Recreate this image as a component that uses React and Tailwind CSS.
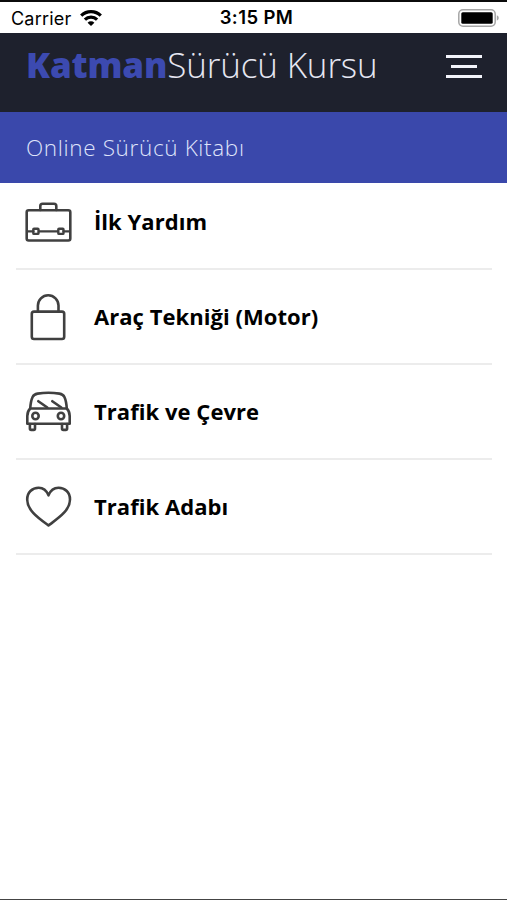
const chapters = [
  { title: "İlk Yardım", Icon: BriefcaseIcon },
  { title: "Araç Tekniği (Motor)", Icon: LockIcon },
  { title: "Trafik ve Çevre", Icon: CarIcon },
  { title: "Trafik Adabı", Icon: HeartIcon },
];

export default function App() {
  return (
    <div className="flex h-[900px] w-[507px] flex-col overflow-hidden border-t-2 border-b border-t-[#0b0b0b] border-b-[#444] bg-white font-['Open_Sans',sans-serif]">
      <StatusBar />
      <Header />
      <div className="flex h-[71px] shrink-0 items-center bg-[#3a48ab] px-[26px]">
        <h1 className="text-[22.5px] font-light tracking-[0.65px] text-[#dfe3fa]">Online Sürücü Kitabı</h1>
      </div>
      <ul className="-mt-2 pr-[15px] pl-4">
        {chapters.map((chapter) => (
          <ChapterRow key={chapter.title} {...chapter} />
        ))}
      </ul>
    </div>
  );
}

function StatusBar() {
  return (
    <div className="grid h-[31px] shrink-0 grid-cols-3 items-center bg-white pt-px pr-2 pl-[11px] font-['Inter','Liberation_Sans',sans-serif] text-black">
      <div className="flex items-center gap-[9px]">
        <span className="text-[18px] tracking-[0.2px]">Carrier</span>
        <WifiIcon />
      </div>
      <span className="pl-[3px] text-center text-[18.5px] font-semibold tracking-[0.4px] whitespace-nowrap">3:15 PM</span>
      <div className="flex justify-end">
        <BatteryIcon />
      </div>
    </div>
  );
}

function Header() {
  return (
    <header className="flex h-[79px] shrink-0 items-start justify-between bg-[#1e212d] pr-[25px] pl-[26px]">
      <div className="pt-[7px] text-[35px] leading-[50px] tracking-[-0.15px] whitespace-nowrap">
        <span className="font-extrabold text-[#3c4ab0]">Katman</span>
        <span className="font-light text-[#e6e7f2]">Sürücü Kursu</span>
      </div>
      <button className="mt-[22px] flex w-9 flex-col items-center gap-[7px]" aria-label="Menü">
        <span className="h-[3px] w-9 bg-[#f3f4fb]" />
        <span className="h-[3px] w-[26px] bg-[#f3f4fb]" />
        <span className="h-[3px] w-9 bg-[#f3f4fb]" />
      </button>
    </header>
  );
}

function ChapterRow({ title, Icon }) {
  return (
    <li className="flex h-[95px] items-center gap-[22px] border-b-2 border-[#ececec] pl-2">
      <Icon />
      <span className="text-[22px] font-bold tracking-[0.05px] text-black">{title}</span>
    </li>
  );
}

function LineIcon({ children }) {
  return (
    <svg
      className="size-12 shrink-0 text-[#404040]"
      viewBox="0 0 48 48"
      fill="none"
      stroke="currentColor"
      strokeWidth="2.6"
      strokeLinecap="round"
      strokeLinejoin="round"
    >
      {children}
    </svg>
  );
}

function BriefcaseIcon() {
  return (
    <LineIcon>
      <rect x="2.7" y="12.3" width="43.6" height="30.2" rx="2" />
      <path d="M16.3 12V8q0-2.3 2.3-2.3h11.4q2.3 0 2.3 2.3v4" />
      <path d="M3 33.3h6.5M15 33.3h19M39.5 33.3H46" strokeWidth="2.2" />
      <rect x="9.3" y="30.7" width="5.2" height="5.2" rx=".7" strokeWidth="2.4" />
      <rect x="34.3" y="30.7" width="5.2" height="5.2" rx=".7" strokeWidth="2.4" />
    </LineIcon>
  );
}

function LockIcon() {
  return (
    <LineIcon>
      <rect x="7.8" y="18.6" width="32.4" height="27.4" rx="2.2" />
      <path d="M13.9 18V12.6a10.3 10.3 0 0 1 20.6 0V18" />
    </LineIcon>
  );
}

function CarIcon() {
  return (
    <LineIcon>
      {/* roof */}
      <path d="M6.2 20.5C6.5 16 7.2 12 8.6 9c1-2.2 2.7-3 5-3.4 7-1.100 14.800-1.100 21.800 0 2.300.4 4 1.200 5 3.400 1.400 3 2.100 7 2.400 11.500" />
      {/* body */}
      <path d="M6.200 20.500h36.600c2 2 2.900 4.500 2.900 7.500v7.700H3.300V28c0-3 .9-5.500 2.900-7.500z" />
      <circle cx="11.500" cy="28" r="3.200" />
      <circle cx="37" cy="28" r="3.200" />
      {/* wipers */}
      <path d="M14.300 13.200l9 6.300M28.300 13.200l9 6.300" />
      {/* wheels */}
      <path d="M5.900 36v4.600q0 1.300 1.300 1.300h2.500q1.300 0 1.300-1.300V36M38 36v4.600q0 1.300 1.300 1.300h2.500q1.300 0 1.300-1.300V36" />
    </LineIcon>
  );
}

function HeartIcon() {
  return (
    <LineIcon>
      <path d="M24.500 12.300C22.500 7.500 19 4.800 14.700 4.800 8 4.800 3.200 9.500 3.200 16.500c0 11 11.300 18.500 21.300 26C34.500 35 46 27.500 46 16.500c0-7-4.800-11.700-11.500-11.700-4.500 0-8 2.700-10 7.500z" />
    </LineIcon>
  );
}

function WifiIcon() {
  return (
    <svg className="h-4 w-[22px]" viewBox="0 0 22 16" fill="none" stroke="black" strokeWidth="3.200">
      <path d="M1.200 5.700a14 14 0 0 1 19.600 0" />
      <path d="M4.900 9.700a8.700 8.700 0 0 1 12.200 0" />
      <path d="M11 16L7.600 12.700a4.800 4.800 0 0 1 6.800 0z" fill="black" stroke="none" />
    </svg>
  );
}

function BatteryIcon() {
  return (
    <svg className="h-[18px] w-[41px]" viewBox="0 0 41 18" fill="none">
      <rect x=".8" y=".8" width="36.400" height="16.400" rx="4.200" stroke="#a6a6a6" strokeWidth="1.500" />
      <rect x="3.300" y="3.300" width="31.400" height="11.400" rx="1.500" fill="black" />
      <path d="M38.800 6.300q2 .8 2 2.700t-2 2.700z" fill="#a6a6a6" />
    </svg>
  );
}
